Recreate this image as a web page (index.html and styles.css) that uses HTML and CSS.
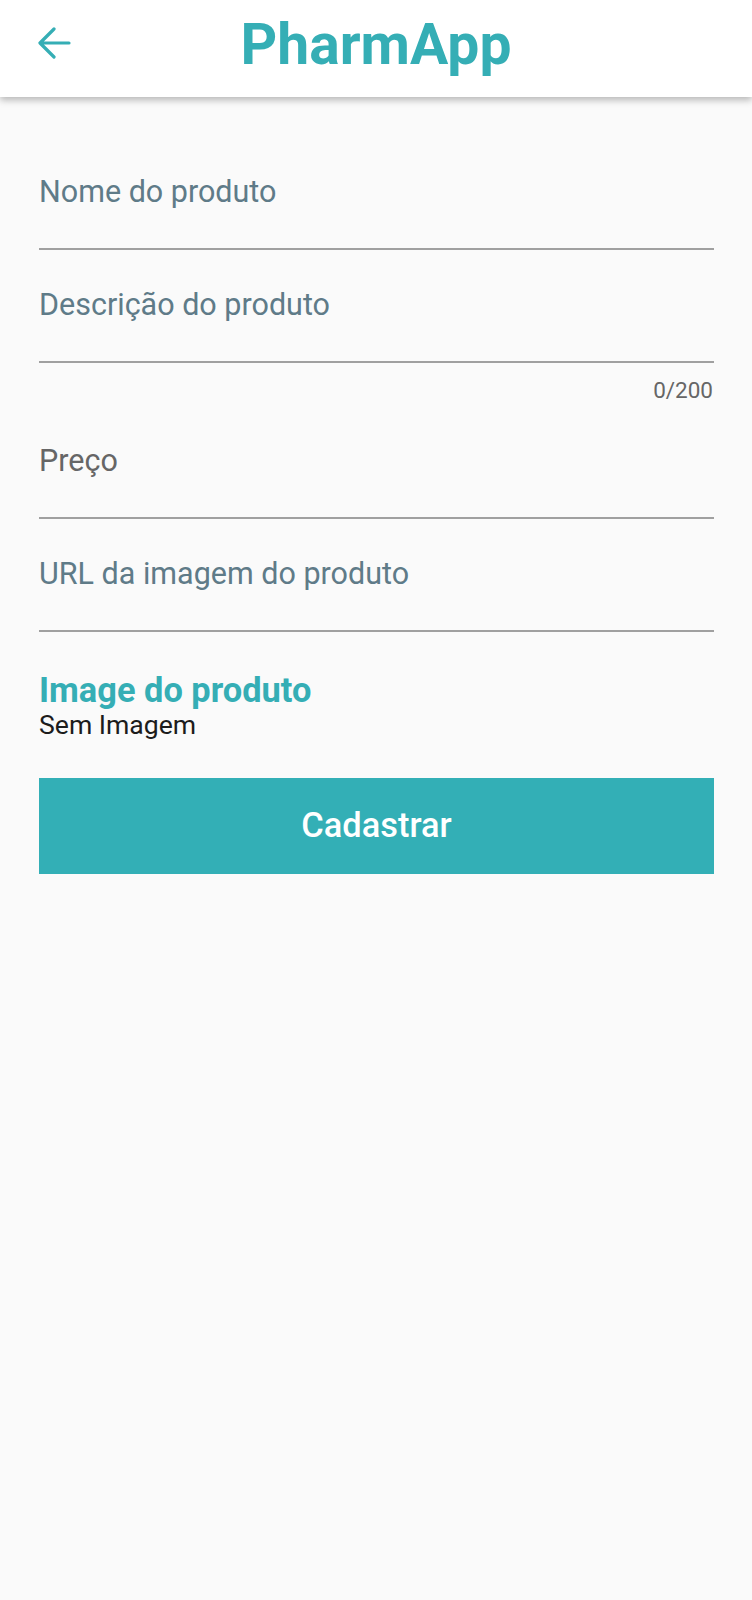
FILE: index.html
```html
<!DOCTYPE html>
<html lang="pt">
<head>
<meta charset="utf-8">
<title>PharmApp</title>
<link rel="stylesheet" href="styles.css">
</head>
<body>
<header class="app-bar">
  <button class="back" aria-label="Voltar">
    <svg width="34" height="34" viewBox="0 0 34 34" aria-hidden="true">
      <path d="M32 16H3.5M17 2L3 16l14 14" fill="none" stroke="#35aeb5" stroke-width="3.2" stroke-linecap="round" stroke-linejoin="round"/>
    </svg>
  </button>
  <h1 class="title">PharmApp</h1>
</header>
<main class="form">
  <div class="field"><span class="label">Nome do produto</span></div>
  <div class="field"><span class="label">Descrição do produto</span></div>
  <div class="counter">0/200</div>
  <div class="field"><span class="label gray">Preço</span></div>
  <div class="field"><span class="label">URL da imagem do produto</span></div>
  <h2 class="img-title">Image do produto</h2>
  <p class="img-none">Sem Imagem</p>
  <button class="submit">Cadastrar</button>
</main>
</body>
</html>
```
FILE: styles.css
```css
* { box-sizing: border-box; }
html, body { margin: 0; padding: 0; }
body {
  background: #fafafa;
  font-family: Roboto, "Liberation Sans", sans-serif;
  width: 752px;
  min-height: 1600px;
}
.app-bar {
  height: 97px;
  background: #ffffff;
  box-shadow: 0 3px 7px rgba(0,0,0,0.28);
  display: flex;
  align-items: center;
  justify-content: center;
  position: relative;
}
.back {
  position: absolute;
  left: 37px;
  top: 27px;
  width: 34px;
  height: 34px;
  padding: 0;
  border: 0;
  background: none;
  display: flex;
}
.title {
  margin: 0;
  font-size: 57px;
  font-weight: 700;
  color: #35aeb5;
  line-height: 1;
  padding-bottom: 8px;
}
.form {
  padding: 39px 38px 0 39px;
  display: flex;
  flex-direction: column;
}
.field {
  padding: 37.5px 0 38px;
  border-bottom: 2px solid #a0a0a0;
}
.label {
  display: block;
  font-size: 30.5px;
  line-height: 36px;
  color: #5f7b88;
}
.label.gray { color: #666666; }
.counter {
  text-align: right;
  font-size: 22.5px;
  line-height: 26px;
  color: #666666;
  margin-top: 14px;
  margin-bottom: 2px;
  padding-right: 1px;
}
.img-title {
  margin: 39px 0 0;
  font-size: 34.4px;
  line-height: 38px;
  font-weight: 700;
  color: #35aeb5;
}
.img-none {
  margin: 1px 0 0;
  font-size: 26.6px;
  line-height: 30px;
  color: #1c1c1c;
}
.submit {
  margin-top: 38px;
  height: 96px;
  border: 0;
  background: #33afb6;
  color: #ffffff;
  font-family: Roboto, "Liberation Sans", sans-serif;
  font-size: 34.4px;
  font-weight: 500;
  display: flex;
  align-items: center;
  justify-content: center;
  padding: 0 0 2px;
}
```
